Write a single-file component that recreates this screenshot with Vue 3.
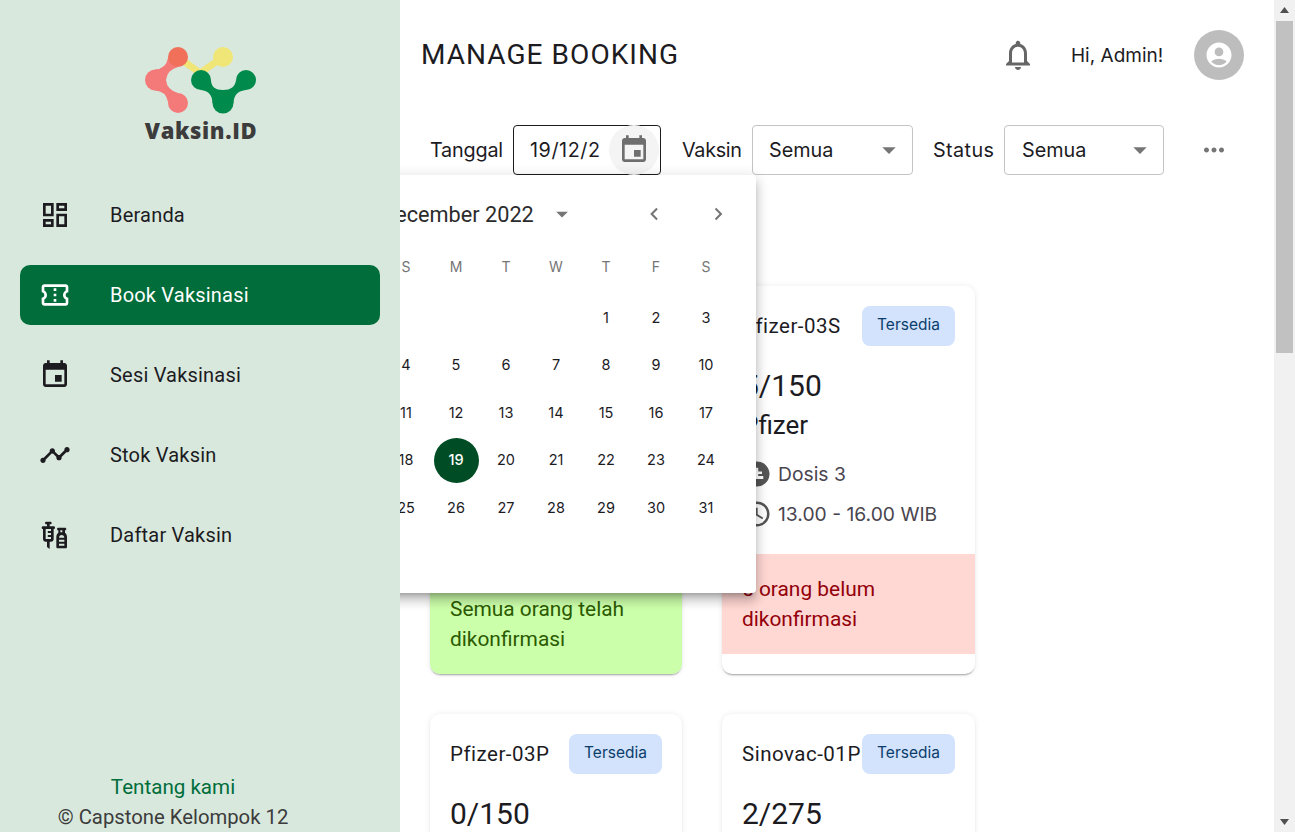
<script setup>
const icons = {
  dash: 'M19 5v2h-4V5h4M9 5v6H5V5h4m10 8v6h-4v-6h4M9 17v2H5v-2h4M21 3h-8v6h8V3zM11 3H3v10h8V3zm10 8h-8v10h8V11zm-10 4H3v6h8v-6z',
  ticket: 'M22 10V6c0-1.11-.9-2-2-2H4c-1.1 0-1.99.89-1.99 2v4c1.1 0 1.99.9 1.99 2s-.89 2-2 2v4c0 1.1.9 2 2 2h16c1.1 0 2-.9 2-2v-4c-1.1 0-2-.9-2-2s.9-2 2-2zm-2-1.46c-1.19.69-2 1.99-2 3.46s.81 2.77 2 3.46V18H4v-2.54c1.19-.69 2-1.99 2-3.46 0-1.48-.8-2.77-1.99-3.46L4 6h16v2.54zM11 15h2v2h-2zm0-4h2v2h-2zm0-4h2v2h-2z',
  event: 'M17 12h-5v5h5v-5zM16 1v2H8V1H6v2H5c-1.11 0-1.99.9-1.99 2L3 19c0 1.1.89 2 2 2h14c1.1 0 2-.9 2-2V5c0-1.1-.9-2-2-2h-1V1h-2zm3 18H5V8h14v11z',
  timeline: 'M23 8c0 1.1-.9 2-2 2-.18 0-.35-.02-.51-.07l-3.56 3.55c.05.16.07.34.07.52 0 1.1-.9 2-2 2s-2-.9-2-2c0-.18.02-.36.07-.52l-2.55-2.55c-.16.05-.34.07-.52.07s-.36-.02-.52-.07l-4.55 4.56c.05.16.07.33.07.51 0 1.1-.9 2-2 2s-2-.9-2-2 .9-2 2-2c.18 0 .35.02.51.07l4.56-4.55C8.02 9.36 8 9.18 8 9c0-1.1.9-2 2-2s2 .9 2 2c0 .18-.02.36-.07.52l2.55 2.55c.16-.05.34-.07.52-.07s.36.02.52.07l3.55-3.56C19.02 8.35 19 8.18 19 8c0-1.1.9-2 2-2s2 .9 2 2z',
  vaccines: 'M11 5.5H8V4h.5c.55 0 1-.45 1-1s-.45-1-1-1h-3c-.55 0-1 .45-1 1s.45 1 1 1H6v1.5H3c-.55 0-1 .45-1 1s.45 1 1 1V15c0 1.1.9 2 2 2h1v4l2 1.5V17h1c1.1 0 2-.9 2-2V7.5c.55 0 1-.45 1-1s-.45-1-1-1zM9 9H7.25c-.41 0-.75.34-.75.75s.34.75.75.75H9v1.5H7.25c-.41 0-.75.34-.75.75s.34.75.75.75H9V15H5V7.5h4V9zm10.5 1.39V8.5c.55 0 1-.45 1-1s-.45-1-1-1h-5c-.55 0-1 .45-1 1s.45 1 1 1v1.89c-.89.66-1.5 1.87-1.5 3.11V21c0 .55.45 1 1 1h6c.55 0 1-.45 1-1v-7.5c0-1.24-.61-2.45-1.5-3.11zM16 8.5h1.5v1.5H16V8.5zm3 11.5h-4v-1.5h4v1.5zm0-3h-4v-1.5h4V17zm0-3h-4c0-1.1.9-2 2-2s2 .9 2 2z',
  bell: 'M12 22c1.1 0 2-.9 2-2h-4c0 1.1.9 2 2 2zm6-6v-5c0-3.07-1.63-5.64-4.5-6.32V4c0-.83-.67-1.5-1.5-1.5s-1.5.67-1.5 1.5v.68C7.64 5.36 6 7.92 6 11v5l-2 2v1h16v-1l-2-2zm-2 1H8v-6c0-2.48 1.51-4.5 4-4.5s4 2.02 4 4.5v6z',
  account: 'M12 2C6.48 2 2 6.48 2 12s4.48 10 10 10 10-4.48 10-10S17.52 2 12 2zm0 4c1.93 0 3.5 1.57 3.5 3.5S13.93 13 12 13s-3.5-1.57-3.5-3.5S10.07 6 12 6zm0 14c-2.03 0-4.43-.82-6.14-2.88C7.55 15.8 9.68 15 12 15s4.45.8 6.14 2.12C16.43 19.18 14.03 20 12 20z',
  more: 'M6 10c-1.1 0-2 .9-2 2s.9 2 2 2 2-.9 2-2-.9-2-2-2zm12 0c-1.1 0-2 .9-2 2s.9 2 2 2 2-.9 2-2-.9-2-2-2zm-6 0c-1.1 0-2 .9-2 2s.9 2 2 2 2-.9 2-2-.9-2-2-2z',
  drop: 'M7 10l5 5 5-5z',
  prev: 'M15.41 7.41 14 6l-6 6 6 6 1.41-1.41L10.83 12z',
  next: 'M10 6 8.59 7.41 13.17 12l-4.58 4.59L10 18l6-6z',
  clock: 'M11.99 2C6.47 2 2 6.48 2 12s4.47 10 9.99 10C17.52 22 22 17.52 22 12S17.52 2 11.99 2zM12 20c-4.42 0-8-3.58-8-8s3.58-8 8-8 8 3.58 8 8-3.58 8-8 8zm.5-13H11v6l5.25 3.15.75-1.23-4.5-2.67z',
  dose: 'M12 2a10 10 0 1 0 0 20 10 10 0 0 0 0-20zm-1 5h2v3h3v2h-3v1.5h4V16H7v-2.5h4V12H8v-2h3V7z'
}
const nav = [
  { label: 'Beranda', icon: 'dash' },
  { label: 'Book Vaksinasi', icon: 'ticket', active: true },
  { label: 'Sesi Vaksinasi', icon: 'event' },
  { label: 'Stok Vaksin', icon: 'timeline' },
  { label: 'Daftar Vaksin', icon: 'vaccines' }
]
const weekdays = ['S', 'M', 'T', 'W', 'T', 'F', 'S']
const blanks = [0, 1, 2, 3]
const days = Array.from({ length: 31 }, (_, i) => i + 1)
const cards = [
  { name: 'Pfizer-01P', count: '150/150', brand: 'Pfizer', dose: 'Dosis 1', time: '08.00 - 11.00 WIB', note: 'Semua orang telah dikonfirmasi', tone: 'ok' },
  { name: 'Pfizer-03S', count: '5/150', brand: 'Pfizer', dose: 'Dosis 3', time: '13.00 - 16.00 WIB', note: '5 orang belum dikonfirmasi', tone: 'warn' },
  { name: 'Pfizer-03P', count: '0/150', brand: 'Pfizer', dose: 'Dosis 3', time: '08.00 - 11.00 WIB', note: '', tone: '' },
  { name: 'Sinovac-01P', count: '2/275', brand: 'Sinovac', dose: 'Dosis 1', time: '08.00 - 11.00 WIB', note: '', tone: '' }
]
</script>

<template>
  <div class="page">
    <aside class="sidebar">
      <div class="logo">
        <svg class="logo-mark" width="114" height="70" viewBox="143 45 114 70">
          <path d="M178 57 L200 73 L223 57" fill="none" stroke="#f0e678" stroke-width="7" stroke-linecap="round" />
          <circle cx="223" cy="57" r="10" fill="#f0e678" />
          <path d="M168 58 Q166 69 155 69.5 L155 90.5 Q166 91 168 102 L178 93 Q167 90 166 80 Q167 70 178 67 Z" fill="#f47a7a" />
          <circle cx="155.5" cy="80" r="10.5" fill="#f47a7a" />
          <circle cx="178" cy="103" r="10" fill="#f47a7a" />
          <circle cx="178" cy="57" r="10" fill="#f0705a" />
          <path d="M201 90 Q212 91 212.5 103 L233.5 103 Q234 91 246 90 L236 80 Q235 90 223 90 Q211 90 211 80 Z" fill="#008a4b" />
          <circle cx="201" cy="80" r="10" fill="#008a4b" />
          <circle cx="246" cy="80" r="10" fill="#008a4b" />
          <circle cx="223" cy="103" r="10.5" fill="#008a4b" />
        </svg>
        <div class="logo-text">Vaksin.ID</div>
      </div>
      <nav class="nav">
        <a v-for="item in nav" :key="item.label" class="nav-item" :class="{ active: item.active }">
          <svg class="nav-icon" viewBox="0 0 24 24"><path :d="icons[item.icon]" /></svg>
          <span>{{ item.label }}</span>
        </a>
      </nav>
      <footer class="side-foot">
        <div class="about">Tentang kami</div>
        <div>© Capstone Kelompok 12</div>
      </footer>
    </aside>

    <main class="main">
      <header class="topbar">
        <h1 class="title">MANAGE BOOKING</h1>
        <svg class="bell" viewBox="0 0 24 24"><path :d="icons.bell" /></svg>
        <span class="hello">Hi, Admin!</span>
        <div class="avatar"><svg viewBox="0 0 24 24"><path :d="icons.account" /></svg></div>
      </header>

      <section class="filters">
        <label class="filter">
          <span class="lab lab-date">Tanggal</span>
          <div class="field date-field">
            <span class="date-value">19/12/2022</span>
            <span class="date-btn"><svg viewBox="0 0 24 24"><path :d="icons.event" /></svg></span>
          </div>
        </label>
        <label class="filter f-vaksin">
          <span class="lab lab-vaksin">Vaksin</span>
          <div class="field select sel-a">
            <span>Semua</span>
            <svg viewBox="0 0 24 24"><path :d="icons.drop" /></svg>
          </div>
        </label>
        <label class="filter f-status">
          <span class="lab lab-status">Status</span>
          <div class="field select sel-b">
            <span>Semua</span>
            <svg viewBox="0 0 24 24"><path :d="icons.drop" /></svg>
          </div>
        </label>
        <svg class="more" viewBox="0 0 24 24"><path :d="icons.more" /></svg>
      </section>

      <section class="cards">
        <article v-for="c in cards" :key="c.name" class="card" :class="c.tone">
          <div class="card-head">
            <span class="card-name">{{ c.name }}</span>
            <span class="badge">Tersedia</span>
          </div>
          <div class="card-body">
            <div class="count">{{ c.count }}</div>
            <div class="brand">{{ c.brand }}</div>
            <div class="meta"><svg viewBox="0 0 24 24"><path :d="icons.dose" fill-rule="evenodd" /></svg><span>{{ c.dose }}</span></div>
            <div class="meta"><svg viewBox="0 0 24 24"><path :d="icons.clock" /></svg><span>{{ c.time }}</span></div>
          </div>
          <div v-if="c.note" class="note">{{ c.note }}</div>
        </article>
      </section>

      <div class="picker">
        <div class="picker-head">
          <span class="month">December 2022</span>
          <svg class="month-drop" viewBox="0 0 24 24"><path :d="icons.drop" /></svg>
          <svg class="chev chev-prev" viewBox="0 0 24 24"><path :d="icons.prev" /></svg>
          <svg class="chev chev-next" viewBox="0 0 24 24"><path :d="icons.next" /></svg>
        </div>
        <div class="week">
          <span v-for="(d, i) in weekdays" :key="i">{{ d }}</span>
        </div>
        <div class="days">
          <span v-for="b in blanks" :key="'b' + b" class="day"></span>
          <span v-for="d in days" :key="d" class="day" :class="{ selected: d === 19 }">{{ d }}</span>
        </div>
      </div>
    </main>

    <div class="scrollbar">
      <svg class="sb-arrow" viewBox="0 0 21 21"><path d="M10.5 7 15 13H6z" /></svg>
      <div class="sb-thumb"></div>
      <div class="sb-space"></div>
      <svg class="sb-arrow" viewBox="0 0 21 21"><path d="M6 8h9l-4.5 6z" /></svg>
    </div>
  </div>
</template>

<style>
html, body { margin: 0; overflow: hidden; background: #fff; }
</style>

<style scoped>
.page {
  display: flex;
  height: 832px;
  overflow: hidden;
  font-family: Inter, "Liberation Sans", sans-serif;
  font-size: 19.8px;
  color: #1c1b1f;
  background: #fff;
}
.sidebar {
  position: relative;
  z-index: 2;
  flex: 0 0 400px;
  display: flex;
  flex-direction: column;
  background: #d9e8dd;
}
.logo { height: 185px; display: flex; flex-direction: column; align-items: center; padding-top: 45px; box-sizing: border-box; }
.logo-mark { display: block; }
.logo-text { margin: 2px 0 0 2px; font: 800 22px/26px "Open Sans", sans-serif; color: #3c3c3c; letter-spacing: .6px; white-space: nowrap; }
.nav { display: flex; flex-direction: column; gap: 20px; padding: 0 20px; }
.nav-item {
  display: flex;
  align-items: center;
  height: 60px;
  padding-left: 19px;
  gap: 39px;
  border-radius: 10px;
  font-family: Roboto, sans-serif;
  font-size: 20px;
  letter-spacing: .2px;
  color: #1c1b1f;
}
.nav-item.active { background: #006d3b; color: #fff; }
.nav-icon { width: 32px; height: 32px; fill: currentColor; flex: none; }
.side-foot {
  margin-top: auto;
  width: 346px;
  text-align: center;
  line-height: 30px;
  font-size: 20.3px;
  font-family: Roboto, sans-serif;
  color: #3c3c3c;
}
.about { color: #006d3b; font-size: 20.6px; }

.main { position: relative; flex: 1; min-width: 0; overflow: hidden; }
.topbar { display: flex; align-items: center; height: 110px; padding: 0 30px 0 21px; }
.title { flex: 1; margin: 0; font: 400 28px/36px Roboto, sans-serif; letter-spacing: 1.05px; color: #1c1b1f; }
.bell { width: 36px; height: 36px; fill: #666; margin-right: 35px; }
.hello { width: 93px; white-space: nowrap; font-size: 19px; color: #1c1b1f; }
.avatar { width: 50px; height: 50px; margin-left: 30px; border-radius: 50%; background: #bdbdbd; display: flex; align-items: center; justify-content: center; }
.avatar svg { width: 30px; height: 30px; fill: #fff; }

.filters { display: flex; align-items: center; height: 50px; margin-top: 15px; padding-left: 30px; }
.filter { display: flex; align-items: center; gap: 10px; }
.f-vaksin { margin-left: 21px; }
.f-status { margin-left: 20px; }
.lab { white-space: nowrap; }
.lab-date { width: 73px; letter-spacing: -.2px; }
.lab-vaksin { width: 60px; letter-spacing: -.3px; }
.lab-status { width: 61px; letter-spacing: .4px; }
.field { box-sizing: border-box; height: 50px; border-radius: 4px; background: #fff; display: flex; align-items: center; }
.date-field { width: 148px; border: 1px solid #1c1b1f; padding-left: 16px; position: relative; }
.date-value { width: 71px; overflow: hidden; white-space: nowrap; letter-spacing: .55px; }
.date-btn { margin-left: 8px; width: 50px; height: 50px; border-radius: 50%; background: #f4f4f4; display: flex; align-items: center; justify-content: center; }
.date-btn svg { width: 32px; height: 32px; fill: #6e6e6e; }
.select { border: 1px solid #c4c4c4; padding: 0 7px 0 16px; justify-content: space-between; }
.select svg { width: 32px; height: 32px; fill: #757575; }
.sel-a { width: 161px; }
.sel-b { width: 160px; padding-left: 17px; }
.more { width: 30px; height: 30px; fill: #757575; margin-left: 35px; }

.cards { display: grid; grid-template-columns: 252px 253px; gap: 40px; margin: 111px 0 0 30px; }
.card {
  display: flex;
  flex-direction: column;
  border-radius: 10px;
  background: #fff;
  overflow: hidden;
  box-shadow: 0 2px 2px -1px rgba(0,0,0,.35), 0 0 6px rgba(0,0,0,.08);
}
.card-head { display: flex; align-items: center; justify-content: space-between; height: 40px; padding: 20px 20px 0; }
.card-name { white-space: nowrap; font-family: Roboto, sans-serif; font-size: 20.5px; letter-spacing: .5px; }
.badge { flex: none; width: 93px; height: 40px; line-height: 38px; text-align: center; border-radius: 8px; background: #d3e3fd; color: #0a3d6b; font-size: 15.5px; }
.card-body { padding: 21px 20px 20px; }
.count { font-size: 30px; line-height: 38px; font-family: Roboto, sans-serif; }
.brand { font-size: 26px; line-height: 41px; margin-bottom: 8px; font-family: Roboto, sans-serif; }
.meta { display: flex; align-items: center; gap: 6px; height: 40px; color: #49454f; font-size: 19.3px; white-space: nowrap; }
.meta svg { width: 30px; height: 30px; fill: #555; flex: none; }
.note { padding: 20px; line-height: 30px; font-size: 20.9px; font-family: Roboto, sans-serif; }
.card.ok .note { margin-top: auto; background: #ccffaa; color: #2b5a00; }
.card.warn .note { margin-bottom: 20px; background: #ffd7d3; color: #93000a; }

.picker {
  position: absolute;
  left: -44px;
  top: 175px;
  width: 400px;
  height: 418px;
  box-sizing: border-box;
  padding: 0 25px;
  background: #fff;
  border-radius: 4px;
  box-shadow: 0 5px 5px -3px rgba(0,0,0,.2), 0 8px 10px 1px rgba(0,0,0,.14), 0 3px 14px 2px rgba(0,0,0,.12);
}
.picker-head { display: flex; align-items: center; height: 78px; }
.month { width: 153px; white-space: nowrap; font-family: Roboto, sans-serif; font-size: 21.7px; color: #2b2b2b; }
.month-drop { width: 32px; height: 32px; fill: #757575; margin-left: 14px; }
.chev { width: 28px; height: 28px; fill: #757575; }
.chev-prev { margin-left: 66px; }
.chev-next { margin-left: 40px; }
.week { display: grid; grid-template-columns: repeat(7, 50px); height: 28px; line-height: 28px; text-align: center; font-size: 14px; color: #757575; }
.days { display: grid; grid-template-columns: repeat(7, 50px); grid-auto-rows: 45px; row-gap: 2.5px; margin-top: 14px; }
.day { box-sizing: border-box; display: flex; align-items: center; justify-content: center; width: 45px; height: 45px; margin-left: 2.5px; padding-bottom: 1px; border-radius: 50%; font-size: 14.5px; color: #1c1b1f; }
.day.selected { background: #004d25; color: #fff; font-weight: 500; }

.scrollbar { flex: 0 0 21px; display: flex; flex-direction: column; background: #f1f1f1; }
.sb-arrow { display: block; width: 21px; height: 21px; fill: #505050; flex: none; }
.sb-thumb { height: 332px; margin-left: 2px; width: 17px; background: #c1c1c1; }
.sb-space { flex: 1; }
</style>
